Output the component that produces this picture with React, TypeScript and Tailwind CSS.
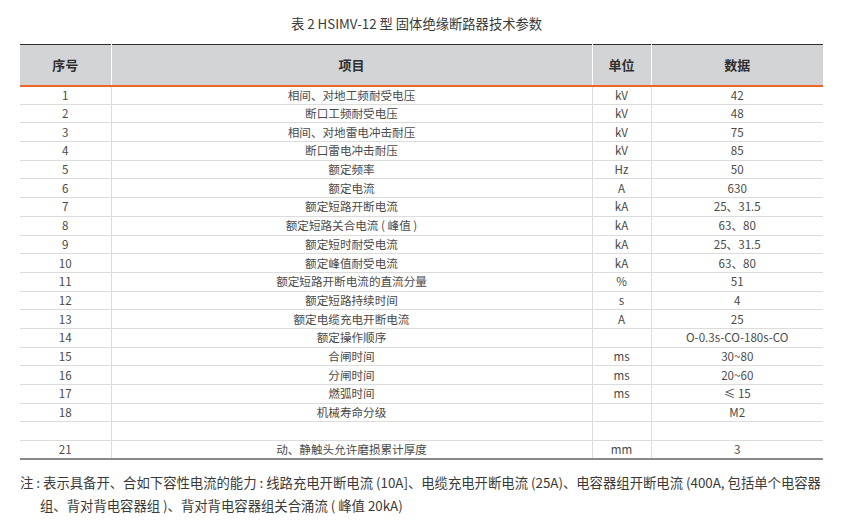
import React from "react";

const ROWS: [string, string, string, string][] = [
  ["1", "相间、对地工频耐受电压", "kV", "42"],
  ["2", "断口工频耐受电压", "kV", "48"],
  ["3", "相间、对地雷电冲击耐压", "kV", "75"],
  ["4", "断口雷电冲击耐压", "kV", "85"],
  ["5", "额定频率", "Hz", "50"],
  ["6", "额定电流", "A", "630"],
  ["7", "额定短路开断电流", "kA", "25、31.5"],
  ["8", "额定短路关合电流 ( 峰值 )", "kA", "63、80"],
  ["9", "额定短时耐受电流", "kA", "25、31.5"],
  ["10", "额定峰值耐受电流", "kA", "63、80"],
  ["11", "额定短路开断电流的直流分量", "%", "51"],
  ["12", "额定短路持续时间", "s", "4"],
  ["13", "额定电缆充电开断电流", "A", "25"],
  ["14", "额定操作顺序", "", "O-0.3s-CO-180s-CO"],
  ["15", "合闸时间", "ms", "30~80"],
  ["16", "分闸时间", "ms", "20~60"],
  ["17", "燃弧时间", "ms", "≤ 15"],
  ["18", "机械寿命分级", "", "M2"],
  ["", "", "", ""],
  ["21", "动、静触头允许磨损累计厚度", "mm", "3"],
];

export default function App() {
  return (
    <div
      className="w-[847px] h-[523px] bg-white text-[#3a3a3a] overflow-hidden"
      style={{ fontFamily: '"Noto Sans CJK SC", "Noto Sans", sans-serif' }}
    >
      <h1 className="pt-[14px] pr-[14px] h-[44px] text-center text-[13.3px] leading-[20px] font-normal">
        表 2 HSIMV-12 型 固体绝缘断路器技术参数
      </h1>

      <table className="ml-[20px] w-[803px] border-collapse table-fixed">
        <colgroup>
          <col className="w-[91px]" />
          <col className="w-[481px]" />
          <col className="w-[59px]" />
          <col className="w-[172px]" />
        </colgroup>
        <thead>
          <tr className="h-[41px] bg-[#d3d4d6] border-t-[1.5px] border-t-[#2e2e2e] border-b-2 border-b-[#f1652c]">
            {["序号", "项目", "单位", "数据"].map((h, i) => (
              <th
                key={h}
                className={`text-[13px] font-bold text-[#2f2f2f] text-center p-0 ${
                  i < 3 ? "border-r border-r-white" : ""
                }`}
              >
                {h}
              </th>
            ))}
          </tr>
        </thead>
        <tbody>
          {ROWS.map((r, idx) => (
            <tr
              key={idx}
              className={`h-[18.7px] ${
                idx === ROWS.length - 1
                  ? "border-b-2 border-b-[#8a8a8a]"
                  : "border-b border-b-[#dcdcdc]"
              }`}
            >
              {r.map((c, i) => (
                <td
                  key={i}
                  className={`p-0 text-center text-[11.6px] leading-[17px] text-[#4a4a4a] ${
                    i < 3 ? "border-r border-r-[#dcdcdc]" : ""
                  }`}
                >
                  {c}
                </td>
              ))}
            </tr>
          ))}
        </tbody>
      </table>

      {/* footnote, hanging indent on the second line */}
      <p className="mt-[11px] ml-[20px] w-[820px] pl-[20px] -indent-[20px] whitespace-nowrap text-[13.35px] leading-[23px] text-[#3a3a3a]">
        注 : 表示具备开、合如下容性电流的能力 : 线路充电开断电流 (10A]、电缆充电开断电流 (25A)、电容器组开断电流 (400A, 包括单个电容器
        <br />
        组、背对背电容器组 )、背对背电容器组关合涌流 ( 峰值 20kA)
      </p>
    </div>
  );
}
